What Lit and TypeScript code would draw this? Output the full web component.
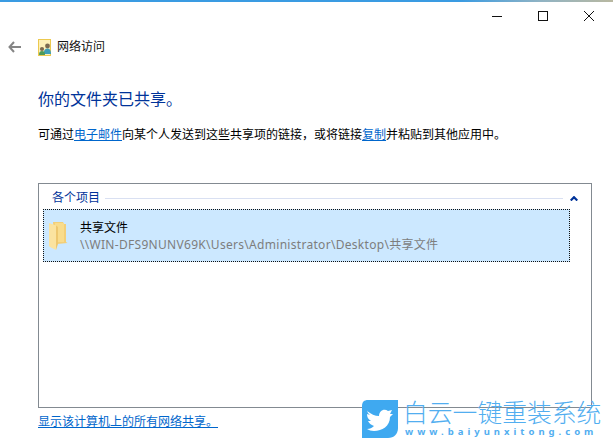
import { LitElement, html, css } from "lit";
import { customElement } from "lit/decorators.js";

@customElement("app-root")
export class AppRoot extends LitElement {
  static styles = css`
    :host {
      display: block;
      position: relative;
      width: 613px;
      height: 443px;
      overflow: hidden;
      background: #fff;
      font-family: "Noto Sans", "Noto Sans CJK SC", sans-serif;
      font-size: 12px;
      color: #000;
    }
    .accent {
      height: 2px;
      background: linear-gradient(90deg, #3a9be2 0%, #3a9be2 75%, #8fb3c4 88%, #b9b8a0 100%);
    }
    .caption {
      height: 26px;
      display: flex;
      justify-content: flex-end;
      padding-right: 1px;
    }
    .cap-btn {
      width: 46px;
      height: 26px;
      display: flex;
      align-items: center;
      justify-content: center;
      padding-top: 2px;
      box-sizing: border-box;
    }
    .nav {
      height: 38px;
      display: flex;
      align-items: center;
      padding-left: 8px;
    }
    .back { width: 13px; height: 12px; margin-right: 17px; }
    .net { width: 13px; height: 17px; margin-right: 6px; }
    .nav-title { font-size: 12px; line-height: 16px; color: #111; }
    .content {
      padding: 0 21px 0 38px;
      display: flex;
      flex-direction: column;
    }
    h1 {
      margin: 22px 0 0;
      font-size: 16px;
      font-weight: 400;
      line-height: 22px;
      color: #003399;
    }
    .desc {
      margin: 15px 0 0;
      font-size: 12px;
      line-height: 20px;
      white-space: nowrap;
    }
    a { color: #0066cc; text-decoration: underline; }
    .box {
      margin-top: 38px;
      height: 225px;
      border: 1px solid #838a91;
      box-sizing: border-box;
      padding: 4px 4px 0 4px;
    }
    .group {
      display: flex;
      align-items: center;
      height: 20px;
      padding-left: 9px;
      color: #003399;
      line-height: 20px;
      font-size: 12px;
    }
    .rule {
      flex: 1;
      height: 1px;
      background: #d9e0f2;
      margin: 0 7px 0 5px;
    }
    .chev { width: 8px; height: 5px; margin-right: 9px; }
    .item {
      width: 527px;
      height: 53px;
      margin-top: 1px;
      box-sizing: border-box;
      background: #cce8ff;
      outline: 1px dotted #111;
      outline-offset: -1px;
      display: flex;
      align-items: center;
      padding-left: 6px;
    }
    .folder { width: 19px; height: 28px; margin-right: 12px; }
    .labels { padding-top: 2px; }
    .name { font-size: 12px; line-height: 16px; color: #000; }
    .path {
      font-size: 12px;
      line-height: 17px;
      color: #7d7d7d;
      white-space: nowrap;
      letter-spacing: 0.3px;
    }
    .all { margin-top: 5px; line-height: 18px; font-size: 12px; white-space: nowrap; }
    .brand {
      position: absolute;
      left: 362px;
      top: 400px;
      display: flex;
      gap: 5px;
    }
    .brand-icon { width: 36px; height: 38px; }
    .brand-text { display: flex; flex-direction: column; gap: 2px; }
    .brand-cn {
      font-size: 24.800px;
      line-height: 25px;
      color: #52aef0;
      font-weight: 300;
      white-space: nowrap;
    }
    .brand-url {
      font-size: 9.500px;
      line-height: 10px;
      color: #52aef0;
      font-weight: 700;
      letter-spacing: 4px;
      white-space: nowrap;
      padding-left: 2px;
    }
  `;

  render() {
    return html`
      <div class="accent"></div>
      <div class="caption">
        <div class="cap-btn">
          <svg width="10" height="10" viewBox="0 0 10 10"><path d="M0 5.500H10" stroke="#111" stroke-width="1"/></svg>
        </div>
        <div class="cap-btn">
          <svg width="10" height="10" viewBox="0 0 10 10"><rect x=".5" y=".5" width="9" height="9" fill="none" stroke="#111"/></svg>
        </div>
        <div class="cap-btn">
          <svg width="10" height="10" viewBox="0 0 10 10"><path d="M0 0L10 10M10 0L0 10" stroke="#111" stroke-width="1"/></svg>
        </div>
      </div>
      <div class="nav">
        <svg class="back" viewBox="0 0 13 12"><path d="M6 1L1.500 6L6 11M2 6H13" fill="none" stroke="#858585" stroke-width="2"/></svg>
        <svg class="net" viewBox="0 0 13 17">
          <rect x=".5" y=".5" width="12" height="16" fill="#fdf0b8" stroke="#ecc94f"/>
          <circle cx="9.500" cy="7" r="2.400" fill="#7c6a50"/>
          <path d="M5.500 15c0-3.500 1.500-5.500 4-5.500S13 11.500 13 15z" fill="#3f9fb8"/>
          <circle cx="4" cy="10" r="2.100" fill="#7c6a50"/>
          <path d="M1 16c0-3 1-4 3-4S7 13 7 16z" fill="#4f9a58"/>
        </svg>
        <span class="nav-title">网络访问</span>
      </div>
      <div class="content">
        <h1>你的文件夹已共享。</h1>
        <p class="desc">可通过<a>电子邮件</a>向某个人发送到这些共享项的链接，或将链接<a>复制</a>并粘贴到其他应用中。</p>
        <div class="box">
          <div class="group">
            <span>各个项目</span><span class="rule"></span>
            <svg class="chev" viewBox="0 0 8 5"><path d="M.7 4.500L4 1.200L7.300 4.500" fill="none" stroke="#003399" stroke-width="2.200"/></svg>
          </div>
          <div class="item">
            <svg class="folder" viewBox="0 0 19 28">
              <path d="M4 0H14L15 2H17V20L18.500 21L8 22H5Z" fill="#f3cf78"/>
              <path d="M6 1H15V20H6Z" fill="#f9dc8c"/>
              <path d="M0 1L7 3.500V28L1 25L0 24Z" fill="#fbe3a0"/>
              <path d="M7 3.500V28L9 22V5Z" fill="#eec76e"/>
            </svg>
            <div class="labels">
              <div class="name">共享文件</div>
              <div class="path">\\\\WIN-DFS9NUNV69K\\Users\\Administrator\\Desktop\\共享文件</div>
            </div>
          </div>
        </div>
        <div class="all"><a>显示该计算机上的所有网络共享。</a></div>
      </div>
      <div class="brand">
        <svg class="brand-icon" viewBox="0 0 36 38">
          <path d="M6 0H36V28C36 34 32 38 26 38H0V6C0 2 2 0 6 0Z" fill="#3fa9f0"/>
          <path d="M5 11c4 3 8 5 12 5c0-5 5-8 9-5l4-1l-2 4l3 0l-3 3c0 9-8 14-16 14c-3 0-5-1-7-2c3 0 5-1 7-3c-3-1-5-3-6-5l3 0c-3-2-4-4-4-7l3 1c-2-2-3-3-3-5z" fill="#fff"/>
        </svg>
        <div class="brand-text">
          <div class="brand-cn">白云一键重装系统</div>
          <div class="brand-url">www.baiyunxitong.com</div>
        </div>
      </div>
    `;
  }
}
